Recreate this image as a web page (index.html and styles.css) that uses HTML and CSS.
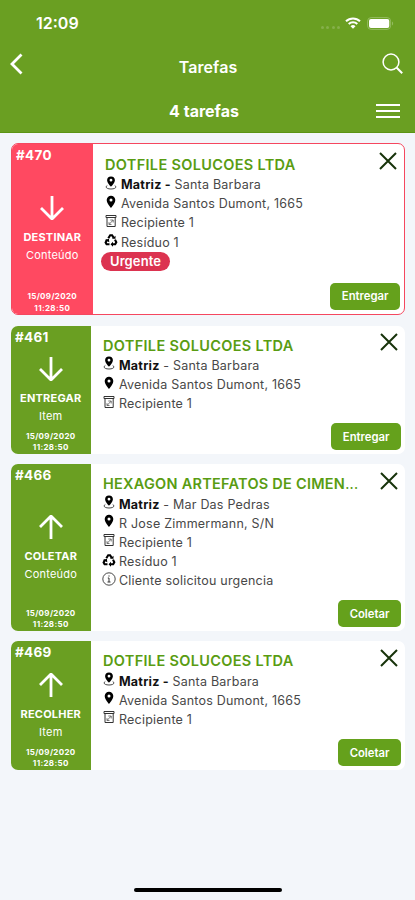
FILE: index.html
```html
<!DOCTYPE html>
<html lang="pt-BR">
<head>
    <meta charset="UTF-8">
    <meta name="viewport" content="width=device-width, initial-scale=1.0">
    <title>Tarefas</title>
    <link rel="stylesheet" href="styles.css">
</head>
<body>
    <!-- Icons -->
    <svg class="sprite">
        <symbol id="branch" viewBox="0 0 12 14">
            <path fill-rule="evenodd" d="M6 .4a3.900 3.900 0 0 0-3.900 3.900C2.100 7 6 10.800 6 10.800s3.900-3.800 3.900-6.500A3.900 3.900 0 0 0 6 .4zm0 2.400a1.400 1.400 0 1 1 0 2.800 1.400 1.400 0 0 1 0-2.800z"/>
            <path d="M2.300 9.500C-.3 10.900 1.500 13 6 13s6.300-2.100 3.700-3.500" fill="none" stroke="#333" stroke-width=".9"/>
        </symbol>
        <symbol id="pin" viewBox="0 0 12 14">
            <path fill-rule="evenodd" d="M6 .7a4.300 4.300 0 0 0-4.300 4.300C1.700 8.300 6 13 6 13s4.300-4.700 4.300-8A4.300 4.300 0 0 0 6 .7zm0 2.800a1.500 1.500 0 1 1 0 3 1.500 1.500 0 0 1 0-3z"/>
        </symbol>
        <symbol id="bin" viewBox="0 0 12 14">
            <path d="M1 1.500h10v2H1zM2 3.500v9h8.200v-9" fill="none" stroke="#333" stroke-width="1"/>
            <path d="M4.200 10.300 8 6.200M5.300 6h2.900v2.500M4 8.200v2.300h2.500" fill="none" stroke="#555" stroke-width=".8"/>
        </symbol>
        <symbol id="recycle" viewBox="0 0 14 14">
            <path d="M4.300 5.300 6.200 2.300h1.900l1.600 2.600M11 6.600l1.300 2.700-1.100 2H8.300M5.500 11.300H2.600l-1-1.900 1.500-2.600" fill="none" stroke="#000" stroke-width="2.100"/>
            <path d="M8 5.700h3.500V2.700zM9 8.800v4.900l-2.500-2.400zM.7 7l4.200-1.200.4 3.400z"/>
        </symbol>
        <symbol id="info" viewBox="0 0 14 14">
            <g fill="none" stroke="#333"><circle cx="7" cy="7" r="6.200" stroke-width=".9"/><path d="M5.800 6H7v4M5.500 10h3M7 3.400v1.200"/></g>
        </symbol>
        <symbol id="down" viewBox="0 0 24 24">
            <path d="M12 0v22.500M1 12l11 11 11-11" fill="none" stroke="#fff" stroke-width="2.800"/>
        </symbol>
        <symbol id="up" viewBox="0 0 24 24">
            <path d="M12 24V1.500M1 12 12 1l11 11" fill="none" stroke="#fff" stroke-width="2.800"/>
        </symbol>
        <symbol id="close" viewBox="0 0 18 18">
            <path d="m1 1 16 16M17 1 1 17" fill="none" stroke="#17330a" stroke-width="2"/>
        </symbol>
    </svg>

    <header>
        <div class="status-bar">
            <span class="clock">12:09</span>
            <div class="status-icons">
                <span class="signal"><i></i><i></i><i></i><i></i></span>
                <svg class="wifi" viewBox="0 0 16 12">
                    <path d="M1 4.300a10 10 0 0 1 14 0M3.700 7a6.200 6.200 0 0 1 8.600 0" fill="none" stroke="#fff" stroke-width="2"/>
                    <path d="M8 11.800 5.500 9.200a3.600 3.600 0 0 1 5 0z" fill="#fff"/>
                </svg>
                <svg class="battery" viewBox="0 0 27 13">
                    <rect x=".6" y=".6" width="23" height="11.800" rx="3.500" fill="none" stroke="#93bb5f" stroke-width="1"/>
                    <rect x="2" y="2" width="20.300" height="9" rx="2" fill="#fff"/>
                    <path d="M25 4.500v4c1.500-.5 1.500-3.500 0-4z" fill="#93bb5f"/>
                </svg>
            </div>
        </div>
        <div class="nav-bar">
            <svg class="back" viewBox="0 0 13 22"><path d="M11.500 1.500 2 11l9.500 9.500" fill="none" stroke="#fff" stroke-width="2.800"/></svg>
            <h1>Tarefas</h1>
            <svg class="search" viewBox="0 0 21 21"><g fill="none" stroke="#fff" stroke-width="1.500"><circle cx="9" cy="9" r="7.900"/><path d="m14.500 14.500 5.700 5.700" stroke-width="2"/></g></svg>
        </div>
        <div class="sub-bar">
            <h2>4 tarefas</h2>
            <div class="menu"><i></i><i></i><i></i></div>
        </div>
    </header>

    <main>
        <article class="card urgent">
            <div class="side">
                <span class="code">#470</span>
                <div class="action"><svg><use href="#down"/></svg><b>DESTINAR</b><span>Conteúdo</span></div>
                <time>15/09/2020<br>11:28:50</time>
            </div>
            <div class="info">
                <h3>DOTFILE SOLUCOES LTDA</h3>
                <p><svg><use href="#branch"/></svg><span><b>Matriz -</b> Santa Barbara</span></p>
                <p><svg><use href="#pin"/></svg><span class="address">Avenida Santos Dumont, 1665</span></p>
                <p><svg><use href="#bin"/></svg><span>Recipiente 1</span></p>
                <p><svg class="wide"><use href="#recycle"/></svg><span>Resíduo 1</span></p>
                <span class="badge">Urgente</span>
            </div>
            <svg class="close"><use href="#close"/></svg>
            <button>Entregar</button>
        </article>

        <article class="card">
            <div class="side">
                <span class="code">#461</span>
                <div class="action"><svg><use href="#down"/></svg><b>ENTREGAR</b><span>Item</span></div>
                <time>15/09/2020<br>11:28:50</time>
            </div>
            <div class="info">
                <h3>DOTFILE SOLUCOES LTDA</h3>
                <p><svg><use href="#branch"/></svg><span><b>Matriz</b> - Santa Barbara</span></p>
                <p><svg><use href="#pin"/></svg><span class="address">Avenida Santos Dumont, 1665</span></p>
                <p><svg><use href="#bin"/></svg><span>Recipiente 1</span></p>
            </div>
            <svg class="close"><use href="#close"/></svg>
            <button>Entregar</button>
        </article>

        <article class="card tall">
            <div class="side">
                <span class="code">#466</span>
                <div class="action"><svg><use href="#up"/></svg><b>COLETAR</b><span>Conteúdo</span></div>
                <time>15/09/2020<br>11:28:50</time>
            </div>
            <div class="info">
                <h3>HEXAGON ARTEFATOS DE CIMEN<span class="dots">...</span></h3>
                <p><svg><use href="#branch"/></svg><span><b>Matriz</b> - Mar Das Pedras</span></p>
                <p><svg><use href="#pin"/></svg><span class="address">R Jose Zimmermann, S/N</span></p>
                <p><svg><use href="#bin"/></svg><span>Recipiente 1</span></p>
                <p><svg class="wide"><use href="#recycle"/></svg><span>Resíduo 1</span></p>
                <p><svg class="wide"><use href="#info"/></svg><span>Cliente solicitou urgencia</span></p>
            </div>
            <svg class="close"><use href="#close"/></svg>
            <button>Coletar</button>
        </article>

        <article class="card">
            <div class="side">
                <span class="code">#469</span>
                <div class="action"><svg><use href="#up"/></svg><b>RECOLHER</b><span>Item</span></div>
                <time>15/09/2020<br>11:28:50</time>
            </div>
            <div class="info">
                <h3>DOTFILE SOLUCOES LTDA</h3>
                <p><svg><use href="#branch"/></svg><span><b>Matriz -</b> Santa Barbara</span></p>
                <p><svg><use href="#pin"/></svg><span class="address">Avenida Santos Dumont, 1665</span></p>
                <p><svg><use href="#bin"/></svg><span>Recipiente 1</span></p>
            </div>
            <svg class="close"><use href="#close"/></svg>
            <button>Coletar</button>
        </article>
    </main>

    <div class="home-indicator"></div>
</body>
</html>
```
FILE: styles.css
```css
* {
    box-sizing: border-box;
}
body {
    margin: 0;
    height: 900px;
    display: flex;
    flex-direction: column;
    overflow: hidden;
    background-color: #f3f6fa;
    font-family: Inter, "Liberation Sans", sans-serif;
    color: #333;
}
h1, h2, h3, p {
    margin: 0;
}
svg {
    display: block;
    flex: none;
}
.sprite {
    position: absolute;
    width: 0;
    height: 0;
}
header {
    height: 132.500px;
    background-color: #6a9f22;
    border-bottom: 1px solid #5b9413;
    color: #fff;
}
.status-bar {
    display: flex;
    justify-content: space-between;
    align-items: center;
    height: 46px;
    padding: 0 21px 0 36px;
}
.clock {
    font-size: 16px;
    font-weight: 600;
}
.status-icons {
    display: flex;
    align-items: center;
}
.signal {
    display: flex;
    gap: 2.500px;
    margin: 8px 5px 0 0;
}
.signal i {
    width: 3px;
    height: 3px;
    border-radius: 50%;
    background-color: #86b04b;
}
.wifi {
    width: 16px;
    height: 12px;
    margin-right: 6px;
}
.battery {
    width: 27px;
    height: 13px;
}
.nav-bar {
    display: flex;
    justify-content: space-between;
    align-items: center;
    height: 40px;
    padding: 0 12px 0 10px;
}
.back {
    width: 13px;
    height: 22px;
    margin-bottom: 5px;
}
.nav-bar h1 {
    font-size: 16px;
    font-weight: 600;
    letter-spacing: 0.1px;
    padding: 1px 0 0 11px;
}
.search {
    width: 21px;
    height: 21px;
    margin-bottom: 5px;
}
.sub-bar {
    display: grid;
    grid-template-columns: 1fr auto 1fr;
    align-items: center;
    height: 46px;
    padding: 3px 15px 0 8px;
}
.sub-bar h2 {
    grid-column: 2;
    font-size: 16px;
    font-weight: 700;
}
.menu {
    display: flex;
    flex-direction: column;
    gap: 4px;
    width: 24px;
    justify-self: end;
}
.menu i {
    height: 2px;
    background-color: #fff;
}
main {
    flex: 1;
    display: flex;
    flex-direction: column;
    gap: 10.500px;
    padding: 10.500px 10px 0 11px;
}
.card {
    position: relative;
    display: flex;
    height: 128.200px;
    flex: none;
    overflow: hidden;
    border-radius: 7px;
    background-color: #fff;
}
.card.tall {
    height: 166.500px;
}
.card.urgent {
    height: 172.300px;
    border: 1.500px solid #f5475f;
}
.side {
    display: flex;
    flex-direction: column;
    align-items: center;
    flex: none;
    width: 79.500px;
    background-color: #6a9f22;
    color: #fff;
}
.urgent .side {
    width: 80.500px;
    background-color: #ff4961;
}
.code {
    align-self: flex-start;
    padding: 2px 0 0 4px;
    font-size: 13.500px;
    font-weight: 700;
    line-height: 18px;
    letter-spacing: 0.3px;
}
.action {
    flex: 1;
    display: flex;
    flex-direction: column;
    align-items: center;
    justify-content: center;
    padding-top: 5px;
    font-size: 11px;
    line-height: 18px;
    letter-spacing: 0.2px;
}
.action svg {
    width: 24px;
    height: 24px;
    margin-bottom: 8px;
}
.action b {
    font-weight: 700;
    letter-spacing: 0.2px;
}
time {
    font-size: 8px;
    font-weight: 700;
    line-height: 11.500px;
    letter-spacing: 0.35px;
    text-align: center;
}
.info {
    flex: 1;
    min-width: 0;
    padding: 10px 0 0 12.500px;
}
.urgent .info {
    padding-top: 11px;
}
h3 {
    font-size: 14.500px;
    font-weight: 600;
    line-height: 20px;
    letter-spacing: 0.32px;
    color: #599c12;
    white-space: nowrap;
}
.tall h3 {
    letter-spacing: 0.25px;
}
.dots {
    font-weight: 400;
}
.info p {
    display: flex;
    align-items: center;
    height: 19.200px;
    font-size: 12.500px;
    letter-spacing: 0.22px;
    white-space: nowrap;
    color: #484848;
}
.info p svg {
    width: 12px;
    height: 14px;
    margin: -4px 4px 0 0;
}
.info p svg.wide {
    width: 14px;
    margin: -4px 3px 0 -1px;
}
.info p b {
    font-weight: 700;
    color: #111;
}
.badge {
    display: block;
    width: 69px;
    height: 19px;
    margin: 0 0 0 -4px;
    border-radius: 10px;
    background-color: #dc3350;
    color: #fff;
    font-size: 13px;
    font-weight: 600;
    line-height: 19px;
    letter-spacing: 0.1px;
    text-align: center;
}
/* close and button sit over the card text */
.card .close {
    position: absolute;
    top: 7.500px;
    right: 7px;
    width: 18px;
    height: 18px;
}
.card.urgent .close {
    right: 7.500px;
}
.card button {
    position: absolute;
    right: 4px;
    bottom: 3.500px;
    height: 27px;
    padding: 0 11.500px;
    border: none;
    border-radius: 5px;
    background-color: #65a11c;
    color: #fff;
    font-family: inherit;
    font-size: 11.300px;
    font-weight: 600;
}
.card.urgent button {
    bottom: 4.500px;
}
.home-indicator {
    flex: none;
    align-self: center;
    width: 148px;
    height: 4px;
    margin-bottom: 8px;
    border-radius: 2px;
    background-color: #000;
}
```
